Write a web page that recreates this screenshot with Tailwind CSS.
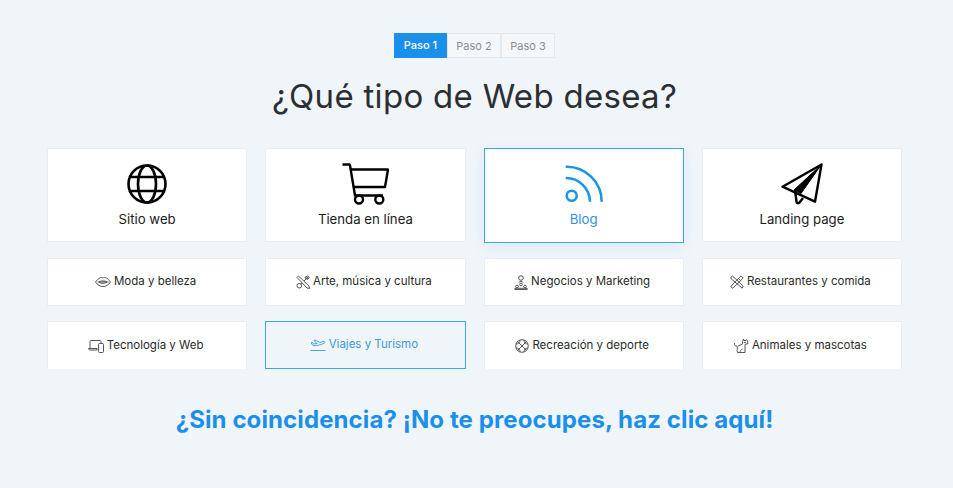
<!DOCTYPE html>
<html lang="es">
<head>
    <meta charset="UTF-8">
    <meta name="viewport" content="width=device-width, initial-scale=1.0">
    <title>Tipo de Web</title>
    <script src="https://cdn.jsdelivr.net/npm/@tailwindcss/browser@4"></script>
</head>
<body class="h-[488px] w-[953px] overflow-hidden bg-[#f0f5fa] font-['Inter',sans-serif] text-[#222]">
  <div class="w-[949px]">
    <div class="flex justify-center pt-[33px]">
        <div class="flex h-[25px] text-[11px] leading-[25px]">
            <span class="w-[53px] text-center bg-[#1a8fec] text-white font-medium">Paso 1</span>
            <span class="w-[54px] text-center bg-[#f5f8fb] text-[#8a8f94] border border-[#e4e8ec]">Paso 2</span>
            <span class="w-[54px] text-center bg-[#f5f8fb] text-[#8a8f94] border border-[#e4e8ec]">Paso 3</span>
        </div>
    </div>

    <h1 class="mt-[14px] h-[48px] text-center text-[33px] leading-[48px] tracking-[0.3px] text-[#2b2f33]">¿Qué tipo de Web desea?</h1>

    <div class="mt-[28px] mx-[47px] grid grid-cols-4 gap-x-[18px] items-start">
        <a class="h-[94px] bg-white border border-[#e9edf2] flex flex-col items-center pt-[14px] text-[13.2px] text-[#1a1a1a]">
            <svg class="w-[42px] h-[42px]" viewBox="0 0 42 42" fill="none" stroke="#000" stroke-width="2.6">
                <circle cx="21" cy="21" r="18.500"/><ellipse cx="21" cy="21" rx="9" ry="18.500"/>
                <path d="M5 14h32M5 28h32" />
            </svg>
            <span class="mt-[4px] leading-[20px]">Sitio web</span>
        </a>
        <a class="h-[94px] bg-white border border-[#e9edf2] flex flex-col items-center pt-[14px] text-[13.2px] text-[#1a1a1a]">
            <svg class="w-[48px] h-[42px]" viewBox="0 0 48 42" fill="none" stroke="#000" stroke-width="2.4" stroke-linejoin="round">
                <path d="M1.500 1.500H8.500L9 2.500l5 30h28"/><path d="M9.500 6.500h37.500L44 24H12"/>
                <circle cx="18" cy="36.500" r="4"/><circle cx="38.300" cy="36.500" r="4"/>
            </svg>
            <span class="mt-[4px] leading-[20px]">Tienda en línea</span>
        </a>
        <a class="h-[95px] bg-white border border-[#3fa3e8] shadow-[0_4px_14px_rgba(33,150,227,0.10)] flex flex-col items-center pt-[14px] text-[13.2px] text-[#2f93e0]">
            <svg class="w-[42px] h-[42px]" viewBox="0 0 42 42" fill="none" stroke="#1a96e6" stroke-width="2.600">
                <path d="M2.700 3.700A35 35 0 0 1 38.700 38.700M2.700 15A24 24 0 0 1 27 38.700"/><circle cx="8.700" cy="32.700" r="5"/>
            </svg>
            <span class="mt-[4px] leading-[20px]">Blog</span>
        </a>
        <a class="h-[94px] bg-white border border-[#e9edf2] flex flex-col items-center pt-[14px] text-[13.2px] text-[#1a1a1a]">
            <svg class="w-[42px] h-[42px]" viewBox="0 0 42 42" fill="none" stroke="#000" stroke-width="2.400" stroke-linejoin="round">
                <path d="M40.500 1.500 1.500 23.700 34 38.700z"/><path d="M40 2 13 27l7 3.500z" fill="#000" stroke-width="1"/><path d="M14 27.500 15.500 38.500c.2 1.800 1.500 2.200 3 1L22 35"/>
            </svg>
            <span class="mt-[4px] leading-[20px]">Landing page</span>
        </a>
    </div>

    <div class="mt-[15px] mx-[47px] grid grid-cols-4 gap-x-[18px] gap-y-[15px] text-[11.5px] text-[#2a2a2a]">
        <a class="h-[48px] pr-[3px] bg-white border border-[#e9edf2] flex items-center justify-center gap-[3px]">
            <svg class="w-[16px] h-[14px]" viewBox="0 0 16 14" fill="none" stroke="#444" stroke-width="0.900">
                <path d="M.5 7C3 3.500 5 2.500 6.500 2.500c.8 0 1 .5 1.500.5s.7-.5 1.500-.5C11 2.500 13 3.500 15.500 7c-2 3-4.500 4.500-7.500 4.500S2.500 10 .5 7z"/><path d="M2.500 7h11M4 7c1.500 1.800 6.500 1.800 8 0M4 7c1.500-1.500 6.500-1.500 8 0"/>
            </svg>
            <span>Moda y belleza</span>
        </a>
        <a class="h-[48px] pr-[3px] bg-white border border-[#e9edf2] flex items-center justify-center gap-[3px]">
            <svg class="w-[14px] h-[14px]" viewBox="0 0 14 14" fill="none" stroke="#444" stroke-width="0.900">
                <path d="M1 2.500 2.500 1 13 11l.5 2.500L11 13z"/><path d="M12.500 1.500 8 6M6 8l-1.500 1.500"/><path d="M10 1.500l2.500 2.500M11.500.8l1.800 1.800-2.300 2-2-2z"/><circle cx="3.300" cy="10.700" r="2.300"/>
            </svg>
            <span>Arte, música y cultura</span>
        </a>
        <a class="h-[48px] pr-[3px] bg-white border border-[#e9edf2] flex items-center justify-center gap-[3px]">
            <svg class="w-[14px] h-[15px]" viewBox="0 0 14 15" fill="none" stroke="#444" stroke-width="0.900">
                <circle cx="7" cy="3" r="2.300"/><path d="M5 7.500c0-1.500 4-1.500 4 0"/><circle cx="7" cy="9.500" r="1.300"/><circle cx="3" cy="11.500" r="1.300"/><circle cx="11" cy="11.500" r="1.300"/><path d="M.8 14.500v-1.200h12.400v1.200z"/>
            </svg>
            <span>Negocios y Marketing</span>
        </a>
        <a class="h-[48px] pr-[3px] bg-white border border-[#e9edf2] flex items-center justify-center gap-[3px]">
            <svg class="w-[14px] h-[14px]" viewBox="0 0 14 14" fill="none" stroke="#444" stroke-width="0.900">
                <path d="M1 2 2.500 1l10.700 10-1 2.200L.8 3.500z"/><path d="M11 .8 13.200 3l-8 8-2.500 2.200-1.900-1.500L3 9z"/><path d="M8.500 3.300l2.200 2.200"/>
            </svg>
            <span>Restaurantes y comida</span>
        </a>

        <a class="h-[48px] pr-[3px] bg-white border border-[#e9edf2] border-b-0 flex items-center justify-center gap-[3px]">
            <svg class="w-[16px] h-[14px]" viewBox="0 0 16 14" fill="none" stroke="#444" stroke-width="0.900">
                <path d="M2 9V2.500A1 1 0 0 1 3 1.500h9a1 1 0 0 1 1 1V4M.5 9.500h8.500v1.500H1.500z"/><rect x="10.500" y="4.500" width="5" height="9" rx="1"/>
            </svg>
            <span>Tecnología y Web</span>
        </a>
        <a class="h-[48px] pr-[3px] border border-[#3fa3e8] flex items-center justify-center gap-[3px] text-[#3d97dc]">
            <svg class="w-[16px] h-[12px]" viewBox="0 0 16 12" fill="none" stroke="#3d97dc" stroke-width="0.900">
                <path d="M.5 11.500h15M1 4l2 2.500c3 .5 8-.5 11.500-2.500.8-.8 0-1.800-1.500-1.500L10 3.500 5 1 4 1.500 7 4.500 3.500 5 2 3z"/>
            </svg>
            <span>Viajes y Turismo</span>
        </a>
        <a class="h-[48px] pr-[3px] bg-white border border-[#e9edf2] border-b-0 flex items-center justify-center gap-[3px]">
            <svg class="w-[14px] h-[14px]" viewBox="0 0 14 14" fill="none" stroke="#444" stroke-width="0.900">
                <circle cx="7" cy="7" r="6.300"/><path d="M2.500 2.500l9 9M11.500 2.500l-9 9M1 5c2.500 0 4-1.500 4-4M9 13c0-2.500 1.500-4 4-4M5 13c0-2.500-1.500-4-4-4M13 5c-2.500 0-4-1.500-4-4"/>
            </svg>
            <span>Recreación y deporte</span>
        </a>
        <a class="h-[48px] pr-[3px] bg-white border border-[#e9edf2] border-b-0 flex items-center justify-center gap-[3px]">
            <svg class="w-[15px] h-[15px]" viewBox="0 0 15 15" fill="none" stroke="#444" stroke-width="0.900">
                <path d="M.5 5c0 3 1.500 3 2.500 3 1 2-.5 4 .5 6.500H11V6.500l3-1-.5-3-1-1-.5 1h-2l-.5-1.500-1 2.500V6L4 8"/><path d="M6 14.500c0-2 1-3 2.500-3.500"/><circle cx="11" cy="4.500" r=".5"/>
            </svg>
            <span>Animales y mascotas</span>
        </a>
    </div>

    <p class="mt-[35px] text-center text-[24px] leading-[32px] tracking-[0.1px] font-bold text-[#1a8fec]">¿Sin coincidencia? ¡No te preocupes, haz clic aquí!</p>
  </div>
</body>
</html>
